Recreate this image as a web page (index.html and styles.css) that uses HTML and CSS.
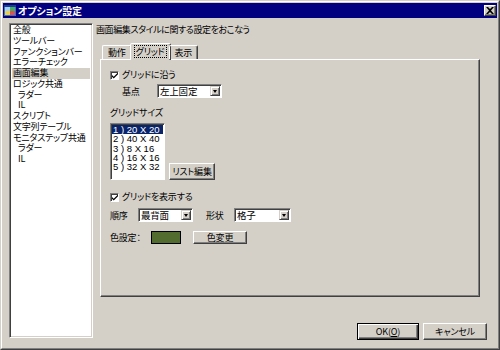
FILE: index.html
```html
<!DOCTYPE html>
<html lang="ja">
<head>
<meta charset="utf-8">
<title>オプション設定</title>
<link rel="stylesheet" href="styles.css">
</head>
<body>
<div class="window">
  <div class="frame">
    <div class="titlebar">
      <svg class="app-icon" width="12" height="12" viewBox="0 0 12 12">
        <rect x="0" y="1" width="12" height="10" fill="#3a6fd0"/>
        <rect x="1" y="2" width="5" height="4" fill="#9fd0ff"/>
        <rect x="6" y="2" width="5" height="4" fill="#40b060"/>
        <rect x="1" y="6" width="5" height="4" fill="#f0d040"/>
        <rect x="6" y="6" width="5" height="4" fill="#e05050"/>
        <rect x="0" y="0" width="12" height="2" fill="#1c3d8c"/>
      </svg>
      <span class="title-text">オプション設定</span>
      <span class="close-btn">
        <svg width="8" height="7" viewBox="0 0 8 7"><path d="M0 0h2l2 2 2-2h2L5 3.5 8 7H6L4 5 2 7H0l3-3.5z" fill="#000"/></svg>
      </span>
    </div>
    <div class="body">
      <ul class="tree">
        <li>全般</li>
        <li>ツールバー</li>
        <li>ファンクションバー</li>
        <li>エラーチェック</li>
        <li class="sel">画面編集</li>
        <li>ロジック共通</li>
        <li class="sub">ラダー</li>
        <li class="sub">IL</li>
        <li>スクリプト</li>
        <li>文字列テーブル</li>
        <li>モニタステップ共通</li>
        <li class="sub">ラダー</li>
        <li class="sub">IL</li>
      </ul>
      <div class="main">
        <div class="heading">画面編集スタイルに関する設定をおこなう</div>
        <div class="tabs">
          <div class="tab">動作</div>
          <div class="tab active"><span class="focus">グリッド</span></div>
          <div class="tab">表示</div>
        </div>
        <div class="panel">
          <div class="check-row">
            <span class="checkbox"><svg width="7" height="7" viewBox="0 0 7 7"><path d="M0 3l2 2 5-5v2L2 7 0 5z" fill="#000"/></svg></span>
            <span>グリッドに沿う</span>
          </div>
          <div class="field-row indent">
            <span class="label-kiten">基点</span>
            <span class="select sel-kiten"><span class="sel-text">左上固定</span><span class="arrow"></span></span>
          </div>
          <div class="group-label">グリッドサイズ</div>
          <div class="list-row">
            <ul class="listbox">
              <li class="sel">1 ) 20 X 20</li>
              <li>2 ) 40 X 40</li>
              <li>3 ) 8 X 16</li>
              <li>4 ) 16 X 16</li>
              <li>5 ) 32 X 32</li>
            </ul>
            <span class="button btn-list">リスト編集</span>
          </div>
          <div class="check-row check-show">
            <span class="checkbox"><svg width="7" height="7" viewBox="0 0 7 7"><path d="M0 3l2 2 5-5v2L2 7 0 5z" fill="#000"/></svg></span>
            <span>グリッドを表示する</span>
          </div>
          <div class="field-row order-row">
            <span class="label-order">順序</span>
            <span class="select sel-order"><span class="sel-text">最背面</span><span class="arrow"></span></span>
            <span class="label-shape">形状</span>
            <span class="select sel-shape"><span class="sel-text">格子</span><span class="arrow"></span></span>
          </div>
          <div class="field-row color-row">
            <span class="label-color">色設定：</span>
            <span class="swatch"></span>
            <span class="button btn-color">色変更</span>
          </div>
        </div>
        <div class="actions">
          <span class="button default">OK(<u>O</u>)</span>
          <span class="button btn-cancel">キャンセル</span>
        </div>
      </div>
    </div>
  </div>
</div>
</body>
</html>
```

FILE: styles.css
```css
* { box-sizing: border-box; }
html, body { margin: 0; padding: 0; }
body {
  width: 500px;
  height: 350px;
  background: #d4d0c8;
  font-family: "Noto Sans CJK JP", "Noto Sans", sans-serif;
  font-size: 9px;
  font-feature-settings: "palt";
  letter-spacing: -0.2px;
  color: #000;
  overflow: hidden;
}
ul { list-style: none; margin: 0; padding: 0; }

.window {
  width: 500px;
  height: 350px;
  border: 1px solid;
  border-color: #d4d0c8 #404040 #404040 #d4d0c8;
}
.frame {
  height: 100%;
  border: 1px solid;
  border-color: #fff #808080 #808080 #fff;
  padding: 1px;
  display: flex;
  flex-direction: column;
}
.titlebar {
  height: 15px;
  background: #000080;
  display: flex;
  align-items: center;
  padding: 0 2px 0 1px;
  color: #fff;
}
.app-icon { flex: none; margin-right: 2px; }
.title-text {
  font-weight: bold;
  font-size: 10px;
  line-height: 15px;
  flex: 1;
}
.close-btn {
  width: 12px;
  height: 11px;
  background: #d4d0c8;
  border: 1px solid;
  border-color: #fff #404040 #404040 #fff;
  box-shadow: inset -1px -1px 0 #808080;
  display: flex;
  align-items: center;
  justify-content: center;
  margin-right: -1px;
}

.body {
  flex: 1;
  display: flex;
  padding: 5px 9px 7px 6px;
}
.tree {
  width: 84px;
  margin-bottom: 2px;
  background: #fff;
  border: 1px solid;
  border-color: #808080 #fff #fff #808080;
  box-shadow: inset 1px 1px 0 #404040, inset -1px -1px 0 #d4d0c8;
  padding: 1px 2px;
}
.tree li {
  line-height: 10.75px;
  height: 10.75px;
  padding-left: 1px;
  white-space: nowrap;
}
.tree li.sub { padding-left: 6px; }
.tree li.sel { background: #d4d0c8; }

.main {
  flex: 1;
  display: flex;
  flex-direction: column;
  margin-left: 3px;
}
.heading {
  line-height: 11px;
  height: 11px;
  margin-top: 1px;
  letter-spacing: -0.4px;
}
.tabs {
  display: flex;
  align-items: flex-end;
  height: 16px;
  margin-top: 8px;
  padding-left: 6px;
  position: relative;
  z-index: 1;
}
.tab {
  height: 14px;
  line-height: 13px;
  padding: 0 5px;
  border: 1px solid;
  border-bottom: none;
  border-color: #fff #404040 transparent #fff;
  box-shadow: inset -1px 0 0 #808080;
  border-radius: 2px 2px 0 0;
}
.tab.active {
  height: 17px;
  margin: 0 -2px -1px;
  padding: 1px 3px 0;
  background: #d4d0c8;
}
.focus {
  border: 1px dotted #000;
  padding: 0 1px;
  line-height: 11px;
  display: inline-block;
}
.panel {
  width: 380px;
  height: 238px;
  margin-left: 4px;
  border: 1px solid;
  border-color: #fff #404040 #404040 #fff;
  box-shadow: inset -1px -1px 0 #808080;
  padding: 10px 9px;
  display: flex;
  flex-direction: column;
}
.check-row {
  display: flex;
  align-items: center;
  height: 10px;
  line-height: 10px;
}
.checkbox {
  width: 9px;
  height: 9px;
  background: #fff;
  border: 1px solid;
  border-color: #808080 #fff #fff #808080;
  box-shadow: inset 1px 1px 0 #404040;
  display: flex;
  align-items: center;
  justify-content: center;
  margin-right: 3px;
  padding: 1px 0 0 1px;
}
.field-row {
  display: flex;
  align-items: center;
  height: 14px;
}
.indent { margin-top: 4px; padding-left: 12px; }
.label-kiten { width: 35px; }
.select {
  height: 14px;
  background: #fff;
  border: 1px solid;
  border-color: #808080 #fff #fff #808080;
  box-shadow: inset 1px 1px 0 #404040;
  display: flex;
  align-items: center;
  padding: 1px 1px 1px 2px;
  font-size: 9.5px;
}
.sel-text { flex: 1; line-height: 11px; }
.arrow {
  width: 10px;
  height: 10px;
  background: #d4d0c8;
  border: 1px solid;
  border-color: #d4d0c8 #404040 #404040 #d4d0c8;
  box-shadow: inset 1px 1px 0 #fff, inset -1px -1px 0 #808080;
  position: relative;
}
.arrow::after {
  content: "";
  position: absolute;
  left: 2px;
  top: 3px;
  border-style: solid;
  border-width: 3px 2.5px 0;
  border-color: #000 transparent transparent;
}
.sel-kiten { width: 65px; }
.group-label {
  margin-top: 10px;
  line-height: 9px;
  height: 9px;
}
.list-row {
  display: flex;
  align-items: flex-end;
  margin-top: 6px;
}
.listbox {
  width: 55px;
  height: 57px;
  background: #fff;
  border: 1px solid;
  border-color: #808080 #fff #fff #808080;
  box-shadow: inset 1px 1px 0 #404040;
  padding: 1px;
}
.listbox li {
  height: 9.3px;
  line-height: 9.3px;
  padding-left: 1px;
  white-space: nowrap;
  font-family: "Liberation Sans", "Noto Sans CJK JP", sans-serif;
  font-size: 9.5px;
  letter-spacing: 0;
}
.listbox li.sel { background: #0a246a; color: #fff; }
.button {
  display: flex;
  align-items: center;
  justify-content: center;
  background: #d4d0c8;
  border: 1px solid;
  border-color: #fff #404040 #404040 #fff;
  box-shadow: inset -1px -1px 0 #808080;
  line-height: 11px;
}
.btn-list { width: 46px; height: 17px; margin-left: 4px; }
.check-show { margin-top: 12px; }
.order-row { margin-top: 6px; }
.label-order { width: 28px; }
.sel-order { width: 55px; }
.label-shape { width: 28px; margin-left: 13px; }
.sel-shape { width: 57px; }
.color-row { margin-top: 9px; height: 13px; }
.label-color { width: 41px; }
.swatch {
  width: 30px;
  height: 13px;
  background: #526b2e;
  border: 1px solid #000;
}
.btn-color { width: 54px; height: 13px; margin-left: 12px; }
.actions {
  margin-top: auto;
  display: flex;
  justify-content: flex-end;
  gap: 4px;
  padding-right: 1px;
}
.actions .button { height: 17px; }
.button.default {
  width: 62px;
  border: 1px solid #000;
  box-shadow: inset 1px 1px 0 #fff, inset -1px -1px 0 #404040, inset -2px -2px 0 #808080;
}
.btn-cancel { width: 64px; }
```
